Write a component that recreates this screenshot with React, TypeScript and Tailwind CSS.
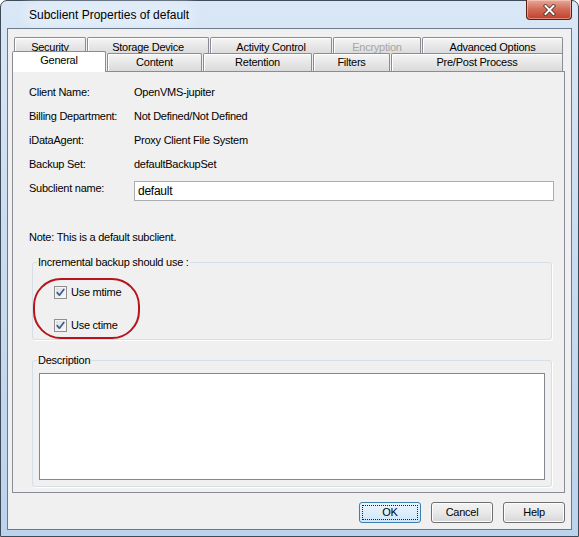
import React from "react";

type Tab = { label: string; w: string; disabled?: boolean };

const backRow: Tab[] = [
  { label: "Security", w: "w-[72px]" },
  { label: "Storage Device", w: "w-[122px]" },
  { label: "Activity Control", w: "w-[122px]" },
  { label: "Encryption", w: "w-[88px]", disabled: true },
  { label: "Advanced Options", w: "w-[141px]" },
];

const frontRow: Tab[] = [
  { label: "Content", w: "w-[95px]" },
  { label: "Retention", w: "w-[109px]" },
  { label: "Filters", w: "w-[77px]" },
  { label: "Pre/Post Process", w: "w-[172px]" },
];

const info: [string, string][] = [
  ["Client Name:", "OpenVMS-jupiter"],
  ["Billing Department:", "Not Defined/Not Defined"],
  ["iDataAgent:", "Proxy Client File System"],
  ["Backup Set:", "defaultBackupSet"],
];

const tabBase =
  "border border-b-0 border-[#898c95] rounded-t-[2px] bg-gradient-to-b from-[#f5f5f5] to-[#dadada] shadow-[inset_1px_1px_0_#ffffff] text-center leading-[13px]";

const CheckBox: React.FC<{ label: string }> = ({ label }) => (
  <label className="flex h-[14px] items-center gap-[4px]">
    <span className="flex h-[13px] w-[13px] items-center justify-center border border-[#8f8f8f] bg-gradient-to-br from-[#dcdcdc] to-[#fbfbfb] shadow-[inset_0_0_0_1px_#f4f4f4]">
      <svg width="11" height="11" viewBox="0 0 11 11">
        <path d="M2.2 5.6 L4.4 8.2 L8.8 2.4" fill="none" stroke="#3d5a96" strokeWidth="1.7" strokeLinecap="round" strokeLinejoin="round" />
      </svg>
    </span>
    <span>{label}</span>
  </label>
);

const Button: React.FC<{ label: string; primary?: boolean }> = ({ label, primary }) =>
  primary ? (
    <button className="flex h-[21px] w-[62px] items-center justify-center rounded-[3px] border border-[#3c7fb1] bg-gradient-to-b from-[#eaf5fd] to-[#cfe6f8] p-[2px]">
      <span className="flex h-full w-full items-center justify-center border border-dotted border-[#222]">{label}</span>
    </button>
  ) : (
    <button className="flex h-[21px] w-[62px] items-center justify-center rounded-[3px] border border-[#707070] bg-gradient-to-b from-[#f3f3f3] via-[#e9e9e9] to-[#d6d6d6] shadow-[inset_0_0_0_1px_#fcfcfc]">
      {label}
    </button>
  );

const App: React.FC = () => {
  return (
    <div className="h-[537px] w-[579px] bg-white font-['Liberation_Sans',Arial,sans-serif] text-[11px] tracking-[-0.25px] text-black">
      <div className="flex h-full flex-col rounded-t-[7px] border border-[#3e4a57] bg-gradient-to-b from-[#d9e7f6] via-[#c8dbf0] to-[#bcd3ee] px-[6px] pb-[6px]">
        {/* title bar */}
        <div className="flex h-[27px] items-start">
          <div className="ml-[20px] flex h-[27px] items-center">
            <span className="rounded-[6px] bg-[#e4eefa]/70 px-[2px] text-[12px] tracking-normal shadow-[0_0_8px_4px_rgba(228,238,250,0.7)]">
              Subclient Properties of default
            </span>
          </div>
          <div className="flex-1" />
          <button className="-mt-[1px] flex h-[20px] w-[46px] items-center justify-center rounded-b-[4px] border border-t-0 border-[#5a1d14] bg-gradient-to-b from-[#e8a898] via-[#d06a56] to-[#c23d27] shadow-[inset_0_0_0_1px_rgba(255,220,210,0.5)]">
            <svg width="13" height="12" viewBox="0 0 13 12">
              <path d="M2.5 2 L10.5 10 M10.5 2 L2.5 10" stroke="#4a2a22" strokeWidth="3.6" strokeLinecap="square" />
              <path d="M2.5 2 L10.5 10 M10.5 2 L2.5 10" stroke="#ffffff" strokeWidth="2" strokeLinecap="square" />
            </svg>
          </button>
        </div>

        {/* client area */}
        <div className="flex flex-1 flex-col border border-[#6b7a8a] bg-[#f0f0f0] pl-[4px] pr-[6px] pb-[6px] pt-[8px]">
          {/* tab headers */}
          <div className="flex flex-col">
            <div className="flex h-[16px] gap-[1px] pl-[2px]">
              {backRow.map((t) => (
                <div key={t.label} className={`${tabBase} ${t.w} h-[17px] pt-[3px] ${t.disabled ? "text-[#a6a6a6]" : ""}`}>
                  {t.label}
                </div>
              ))}
            </div>
            <div className="flex h-[18px] gap-[1px]">
              <div className="relative z-10 -mt-[2px] h-[21px] w-[94px] rounded-t-[2px] border border-b-0 border-[#898c95] bg-white pt-[2px] text-center leading-[13px]">
                General
              </div>
              {frontRow.map((t) => (
                <div key={t.label} className={`${tabBase} ${t.w} h-[18px] pt-[2px]`}>
                  {t.label}
                </div>
              ))}
            </div>
          </div>

          {/* tab page */}
          <div className="flex flex-1 flex-col border border-[#898c95] bg-[#f0f0f0] pl-[16px] pr-[10px] pt-[8px]">
            {info.map(([k, v]) => (
              <div key={k} className="flex h-[24px] items-center leading-[13px]">
                <span className="w-[105px]">{k}</span>
                <span>{v}</span>
              </div>
            ))}
            <div className="mt-[5px] flex items-start leading-[13px]">
              <span className="w-[105px] pt-[1px]">Subclient name:</span>
              <div className="flex h-[20px] flex-1 items-center border border-[#abadb3] bg-white px-[3px] text-[12px]">default</div>
            </div>

            <div className="mt-[30px] leading-[13px]">Note: This is a default subclient.</div>

            <fieldset className="ml-[3px] mr-[2px] mt-[12px] rounded-[3px] border border-[#d5dfe5] pb-[7px] shadow-[1px_1px_0_#ffffff]">
              <legend className="ml-[4px] px-[1px] leading-[13px]">Incremental backup should use :</legend>
              <div className="relative ml-[21px] mt-[16px] flex flex-col gap-[19px]">
                <CheckBox label="Use mtime" />
                <CheckBox label="Use ctime" />
                {/* red callout ring */}
                <div className="pointer-events-none absolute -left-[21px] -top-[7px] h-[61px] w-[107px] rounded-[28px] border-2 border-[#b8141c]" />
              </div>
            </fieldset>

            <fieldset className="ml-[3px] mr-[2px] mt-[14px] rounded-[3px] border border-[#d5dfe5] px-[6px] pb-[6px] shadow-[1px_1px_0_#ffffff]">
              <legend className="-ml-[2px] px-[1px] leading-[13px]">Description</legend>
              <div className="mt-[6px] h-[107px] border border-[#828790] bg-white" />
            </fieldset>
          </div>

          {/* dialog buttons */}
          <div className="mt-[9px] flex justify-end gap-[10px]">
            <Button label="OK" primary />
            <Button label="Cancel" />
            <Button label="Help" />
          </div>
        </div>
      </div>
    </div>
  );
};

export default App;
